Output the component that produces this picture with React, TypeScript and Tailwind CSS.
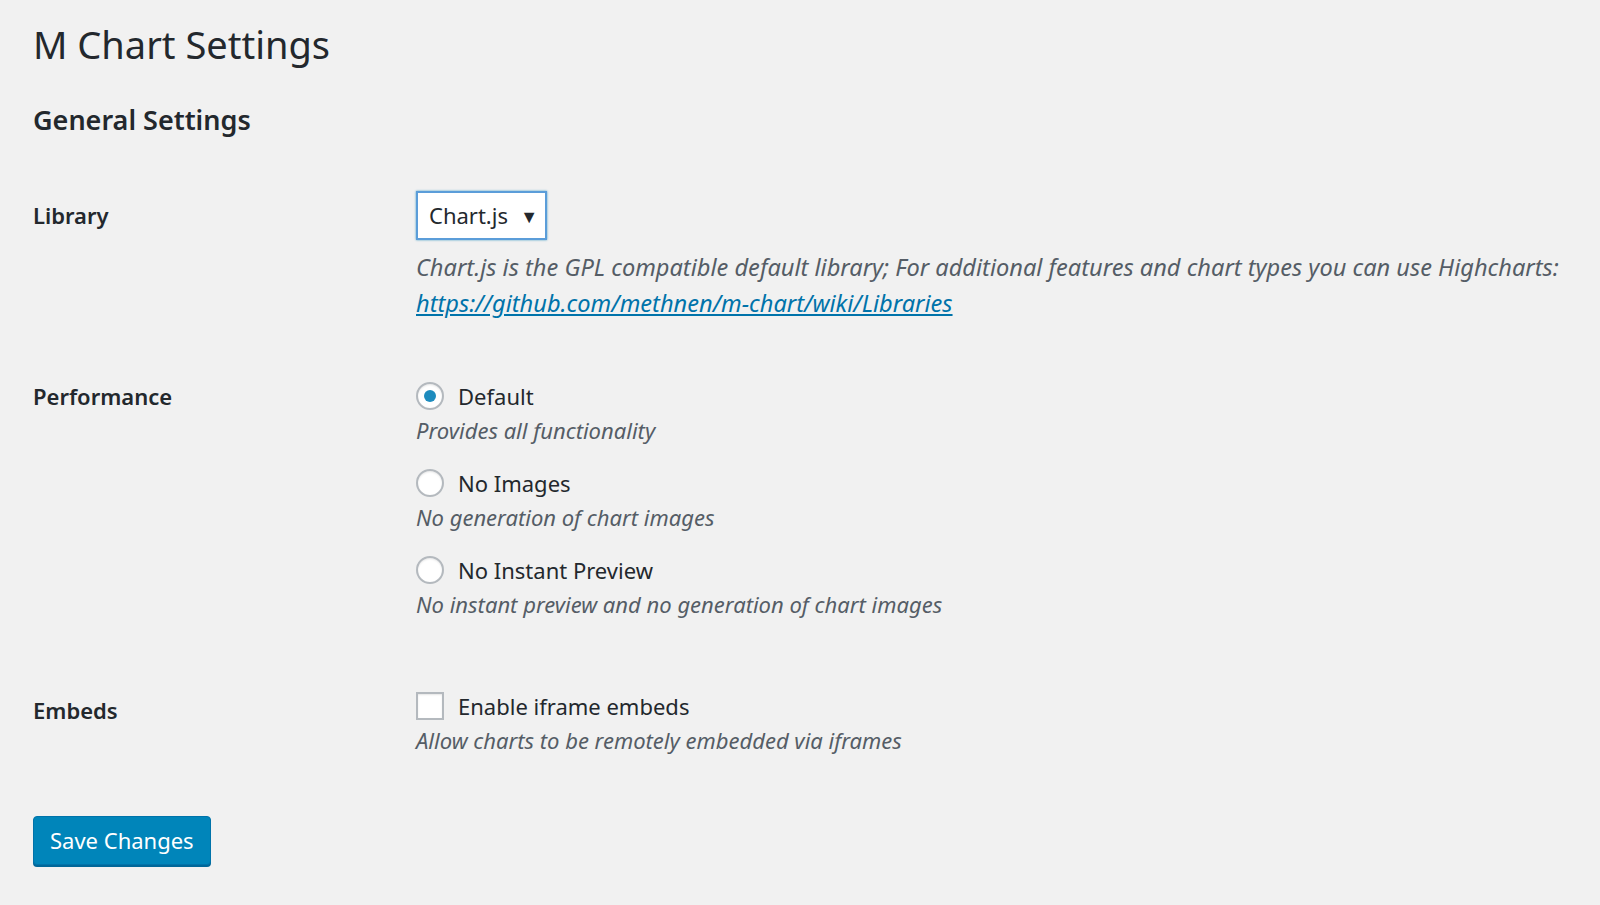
import { useState } from 'react';

const font = { fontFamily: '"Noto Sans", "Open Sans", sans-serif' };

function Radio({ checked }: { checked: boolean }) {
  return (
    <span className="flex h-[28px] w-[28px] shrink-0 items-center justify-center rounded-full border-2 border-[#b4b9be] bg-white shadow-[inset_0_1px_2px_rgba(0,0,0,0.1)]">
      {checked && <span className="h-[12px] w-[12px] rounded-full bg-[#1e8cbe]" />}
    </span>
  );
}

const perfOptions = [
  { label: 'Default', desc: 'Provides all functionality' },
  { label: 'No Images', desc: 'No generation of chart images' },
  { label: 'No Instant Preview', desc: 'No instant preview and no generation of chart images' },
];

export default function App() {
  const [perf] = useState(0);

  return (
    <div className="min-h-[905px] w-full bg-[#f1f1f1] pl-[33px] pt-[18px] text-[#23282d]" style={font}>
      <h1 className="text-[38px] leading-[52px] font-normal">M Chart Settings</h1>
      <h2 className="mt-[31px] text-[27px] leading-[38px] font-semibold">General Settings</h2>

      {/* Library */}
      <div className="mt-[52px] flex">
        <div className="w-[383px] shrink-0 pt-[10px] text-[22px] leading-[28px] font-semibold">Library</div>
        <div>
          <div className="flex h-[49px] w-[131px] items-center justify-between border-2 border-[#5b9dd9] bg-white pl-[11px] pr-[7px] text-[22px] shadow-[0_0_2px_rgba(30,140,190,0.8)]">
            <span>Chart.js</span>
            <span className="text-[18px] leading-none">▼</span>
          </div>
          <p className="mt-[9px] text-[23.6px] leading-[36px] italic text-[#555d66]">
            Chart.js is the GPL compatible default library; For additional features and chart types you can use Highcharts:
            <br />
            <a className="text-[#0073aa] underline">https://github.com/methnen/m-chart/wiki/Libraries</a>
          </p>
        </div>
      </div>

      {/* Performance */}
      <div className="mt-[59px] flex">
        <div className="w-[383px] shrink-0 pt-[2px] text-[22px] leading-[28px] font-semibold">Performance</div>
        <div className="flex flex-col gap-[21px]">
          {perfOptions.map((o, i) => (
            <div key={o.label}>
              <div className="flex items-center gap-[14px] text-[22px] leading-[32px]">
                <Radio checked={i === perf} />
                <span>{o.label}</span>
              </div>
              <p className="mt-[2px] text-[22px] leading-[32px] italic text-[#555d66]">{o.desc}</p>
            </div>
          ))}
        </div>
      </div>

      {/* Embeds */}
      <div className="mt-[70px] flex">
        <div className="w-[383px] shrink-0 pt-[6px] text-[22px] leading-[28px] font-semibold">Embeds</div>
        <div>
          <div className="flex items-center gap-[14px] text-[22px] leading-[32px]">
            <span className="h-[28px] w-[28px] shrink-0 border-2 border-[#b4b9be] bg-white shadow-[inset_0_1px_2px_rgba(0,0,0,0.1)]" />
            <span>Enable iframe embeds</span>
          </div>
          <p className="mt-[2px] text-[22px] leading-[32px] italic text-[#555d66]">Allow charts to be remotely embedded via iframes</p>
        </div>
      </div>

      <button className="mt-[60px] h-[49px] rounded-[4px] border border-[#0073aa] bg-[#0085ba] px-[16px] text-[22px] text-white shadow-[0_2px_0_#006799]">
        Save Changes
      </button>
    </div>
  );
}
